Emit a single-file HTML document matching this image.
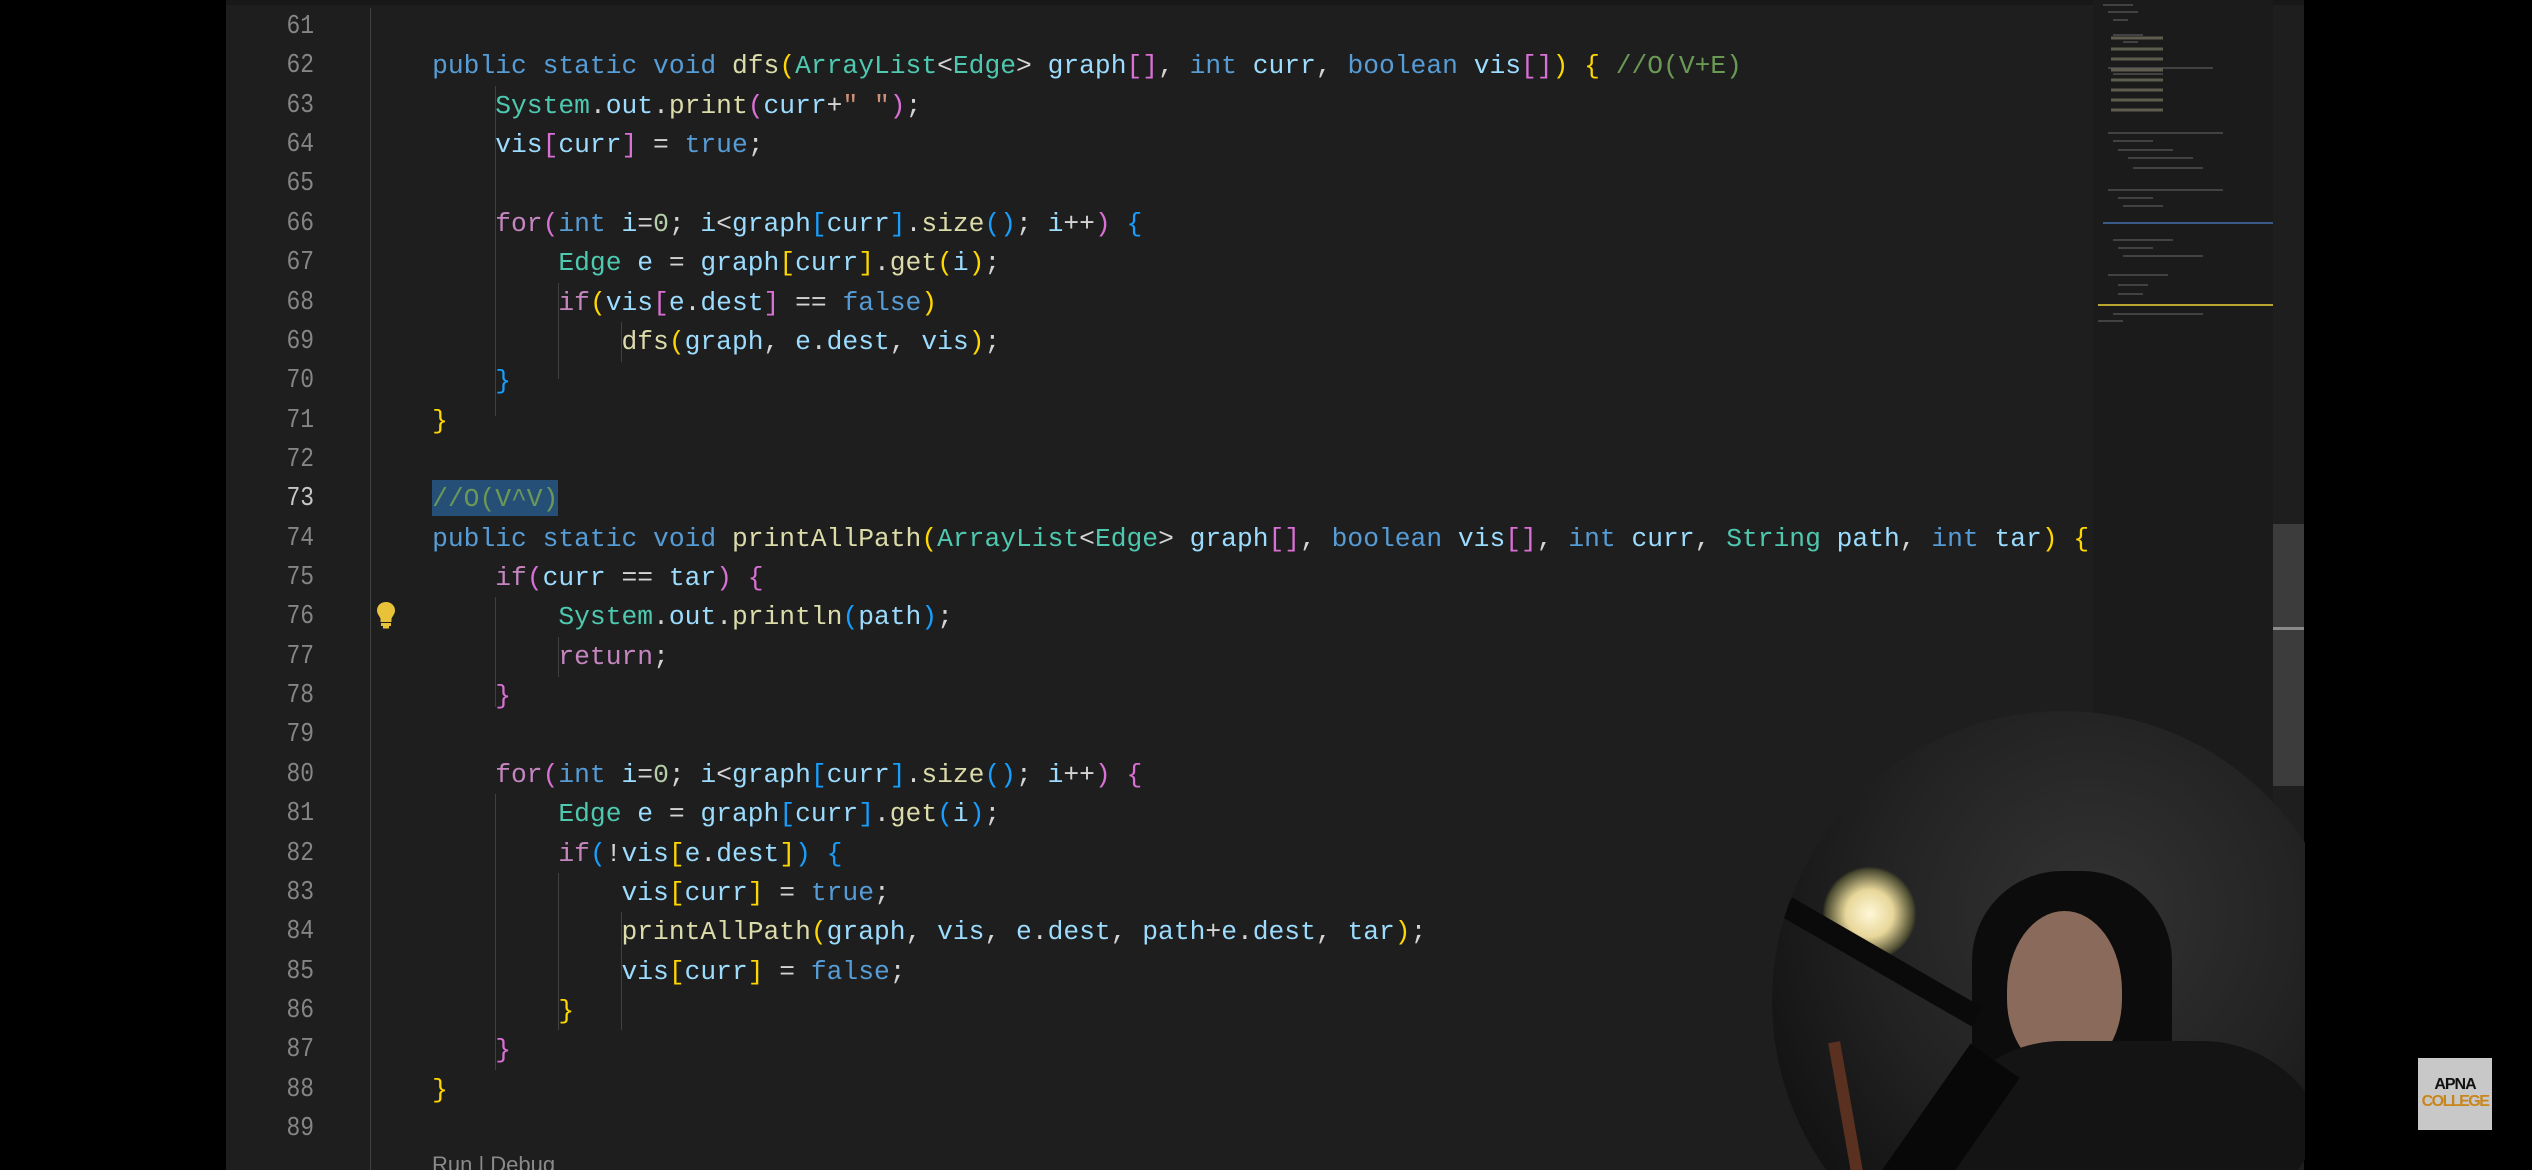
<!DOCTYPE html>
<html><head><meta charset="utf-8"><style>
html,body{margin:0;padding:0;background:#000;width:2532px;height:1170px;overflow:hidden;position:relative}
#ed{position:absolute;left:226px;top:0;width:2078px;height:1170px;background:#1e1e1e;}
#topbar{position:absolute;left:226px;top:0;width:2078px;height:5px;background:#181818}
.nums{position:absolute;left:226px;top:8px;width:88px;text-align:right;font-family:"Liberation Mono",monospace;font-size:27px;line-height:39.36px;color:#858585;transform:scaleX(0.85);transform-origin:right}
.code{position:absolute;left:369px;top:8px;font-family:"Liberation Mono",monospace;font-size:26.3px;line-height:39.36px;color:#d4d4d4;white-space:pre;}
.k{color:#569cd6}.c{color:#c586c0}.t{color:#4ec9b0}.f{color:#dcdcaa}.v{color:#9cdcfe}.s{color:#ce9178}.g{color:#6a9955}
.y{color:#ffd700}.p{color:#da70d6}.b{color:#179fff}.n{color:#b5cea8}
.guide{position:absolute;width:1px;background:#404040}
#mm{position:absolute;left:2093px;top:0;width:180px;height:1170px;background:#1b1b1b}
#sb{position:absolute;left:2273px;top:524px;width:31px;height:262px;background:#3c3c3c}
</style></head><body>
<div id="ed"></div><div id="topbar"></div>
<div id="mm">
<svg width="180" height="330" style="position:absolute;left:0;top:0" stroke-width="1.5">
<g stroke="#666" opacity="0.7">
<line x1="10" y1="5" x2="40" y2="5"/><line x1="15" y1="12" x2="45" y2="12"/><line x1="20" y1="20" x2="35" y2="20"/>
<line x1="20" y1="35" x2="50" y2="35"/><line x1="30" y1="42" x2="45" y2="42"/>
<line x1="15" y1="68" x2="120" y2="68"/><line x1="20" y1="74" x2="70" y2="74"/>
<line x1="15" y1="133" x2="130" y2="133"/><line x1="20" y1="141" x2="60" y2="141"/><line x1="25" y1="150" x2="80" y2="150"/><line x1="35" y1="158" x2="100" y2="158"/><line x1="40" y1="168" x2="110" y2="168"/>
<line x1="15" y1="190" x2="130" y2="190"/><line x1="25" y1="198" x2="60" y2="198"/><line x1="30" y1="206" x2="70" y2="206"/>
<line x1="20" y1="240" x2="80" y2="240"/><line x1="25" y1="248" x2="60" y2="248"/><line x1="30" y1="256" x2="110" y2="256"/>
<line x1="15" y1="275" x2="75" y2="275"/><line x1="25" y1="285" x2="55" y2="285"/><line x1="25" y1="294" x2="50" y2="294"/>
<line x1="20" y1="314" x2="110" y2="314"/><line x1="5" y1="321" x2="30" y2="321"/>
</g>
<g stroke="#8a8a70" stroke-width="3" opacity="0.6">
<line x1="18" y1="38" x2="70" y2="38"/><line x1="18" y1="49" x2="70" y2="49"/><line x1="18" y1="59" x2="70" y2="59"/><line x1="18" y1="70" x2="70" y2="70"/><line x1="18" y1="80" x2="70" y2="80"/><line x1="18" y1="90" x2="70" y2="90"/><line x1="18" y1="100" x2="70" y2="100"/><line x1="18" y1="110" x2="70" y2="110"/>
</g>
<line x1="10" y1="223" x2="180" y2="223" stroke="#3a5a8a" stroke-width="2"/>
<line x1="5" y1="305" x2="180" y2="305" stroke="#b8a530" stroke-width="2"/>
</svg></div>
<div id="sb"><div style="position:absolute;top:103px;left:0;width:31px;height:3px;background:#8a8a8a"></div></div>
<div class="guide" style="left:370px;top:8px;height:1162px"></div>
<div class="guide" style="left:495px;top:86px;height:330px"></div>
<div class="guide" style="left:558px;top:283px;height:96px"></div>
<div class="guide" style="left:621px;top:322px;height:40px"></div>
<div class="guide" style="left:495px;top:597px;height:110px"></div>
<div class="guide" style="left:558px;top:637px;height:40px"></div>
<div class="guide" style="left:495px;top:794px;height:276px"></div>
<div class="guide" style="left:558px;top:873px;height:157px"></div>
<div class="guide" style="left:621px;top:912px;height:118px"></div>
<div style="position:absolute;left:432px;top:480px;width:126px;height:36px;background:#264f78"></div>
<div class="nums">61<br>62<br>63<br>64<br>65<br>66<br>67<br>68<br>69<br>70<br>71<br>72<br><span style="color:#c6c6c6">73</span><br>74<br>75<br>76<br>77<br>78<br>79<br>80<br>81<br>82<br>83<br>84<br>85<br>86<br>87<br>88<br>89</div>
<svg style="position:absolute;left:376px;top:601px" width="20" height="28" viewBox="0 0 20 28"><path d="M10 1C4.5 1 1 5 1 9.5c0 3.5 2.5 5.5 3.5 8V21h11v-3.5c1-2.5 3.5-4.5 3.5-8C19 5 15.5 1 10 1z" fill="#e8c33a"/><rect x="5" y="22" width="10" height="3" fill="#e8c33a"/><rect x="7" y="25" width="6" height="2.5" fill="#e8c33a"/></svg>
<div class="code">
    <span class="k">public static void</span> <span class="f">dfs</span><span class="y">(</span><span class="t">ArrayList</span>&lt;<span class="t">Edge</span>&gt; <span class="v">graph</span><span class="p">[]</span>, <span class="k">int</span> <span class="v">curr</span>, <span class="k">boolean</span> <span class="v">vis</span><span class="p">[]</span><span class="y">)</span> <span class="y">{</span> <span class="g">//O(V+E)</span>
        <span class="t">System</span>.<span class="v">out</span>.<span class="f">print</span><span class="p">(</span><span class="v">curr</span>+<span class="s">" "</span><span class="p">)</span>;
        <span class="v">vis</span><span class="p">[</span><span class="v">curr</span><span class="p">]</span> = <span class="k">true</span>;

        <span class="c">for</span><span class="p">(</span><span class="k">int</span> <span class="v">i</span>=<span class="n">0</span>; <span class="v">i</span>&lt;<span class="v">graph</span><span class="b">[</span><span class="v">curr</span><span class="b">]</span>.<span class="f">size</span><span class="b">()</span>; <span class="v">i</span>++<span class="p">)</span> <span class="b">{</span>
            <span class="t">Edge</span> <span class="v">e</span> = <span class="v">graph</span><span class="y">[</span><span class="v">curr</span><span class="y">]</span>.<span class="f">get</span><span class="y">(</span><span class="v">i</span><span class="y">)</span>;
            <span class="c">if</span><span class="y">(</span><span class="v">vis</span><span class="p">[</span><span class="v">e</span>.<span class="v">dest</span><span class="p">]</span> == <span class="k">false</span><span class="y">)</span>
                <span class="f">dfs</span><span class="y">(</span><span class="v">graph</span>, <span class="v">e</span>.<span class="v">dest</span>, <span class="v">vis</span><span class="y">)</span>;
        <span class="b">}</span>
    <span class="y">}</span>

    <span class="g">//O(V^V)</span>
    <span class="k">public static void</span> <span class="f">printAllPath</span><span class="y">(</span><span class="t">ArrayList</span>&lt;<span class="t">Edge</span>&gt; <span class="v">graph</span><span class="p">[]</span>, <span class="k">boolean</span> <span class="v">vis</span><span class="p">[]</span>, <span class="k">int</span> <span class="v">curr</span>, <span class="t">String</span> <span class="v">path</span>, <span class="k">int</span> <span class="v">tar</span><span class="y">)</span> <span class="y">{</span>
        <span class="c">if</span><span class="p">(</span><span class="v">curr</span> == <span class="v">tar</span><span class="p">)</span> <span class="p">{</span>
            <span class="t">System</span>.<span class="v">out</span>.<span class="f">println</span><span class="b">(</span><span class="v">path</span><span class="b">)</span>;
            <span class="c">return</span>;
        <span class="p">}</span>

        <span class="c">for</span><span class="p">(</span><span class="k">int</span> <span class="v">i</span>=<span class="n">0</span>; <span class="v">i</span>&lt;<span class="v">graph</span><span class="b">[</span><span class="v">curr</span><span class="b">]</span>.<span class="f">size</span><span class="b">()</span>; <span class="v">i</span>++<span class="p">)</span> <span class="p">{</span>
            <span class="t">Edge</span> <span class="v">e</span> = <span class="v">graph</span><span class="b">[</span><span class="v">curr</span><span class="b">]</span>.<span class="f">get</span><span class="b">(</span><span class="v">i</span><span class="b">)</span>;
            <span class="c">if</span><span class="b">(</span>!<span class="v">vis</span><span class="y">[</span><span class="v">e</span>.<span class="v">dest</span><span class="y">]</span><span class="b">)</span> <span class="b">{</span>
                <span class="v">vis</span><span class="y">[</span><span class="v">curr</span><span class="y">]</span> = <span class="k">true</span>;
                <span class="f">printAllPath</span><span class="y">(</span><span class="v">graph</span>, <span class="v">vis</span>, <span class="v">e</span>.<span class="v">dest</span>, <span class="v">path</span>+<span class="v">e</span>.<span class="v">dest</span>, <span class="v">tar</span><span class="y">)</span>;
                <span class="v">vis</span><span class="y">[</span><span class="v">curr</span><span class="y">]</span> = <span class="k">false</span>;
            <span class="y">}</span>
        <span class="p">}</span>
    <span class="y">}</span>
</div>
<div style="position:absolute;left:432px;top:1152px;font-family:'Liberation Sans',sans-serif;font-size:22px;color:#8a8a8a;white-space:pre">Run | Debug</div>
<div style="position:absolute;left:1772px;top:711px;width:533px;height:459px;overflow:hidden">
 <div style="position:absolute;left:0;top:0;width:580px;height:580px;border-radius:50%;overflow:hidden;background:radial-gradient(circle at 55% 35%,#333 0%,#222 45%,#121212 75%)">
  <div style="position:absolute;left:50px;top:155px;width:95px;height:95px;border-radius:50%;background:radial-gradient(circle,#fff8d8 0%,#e8d79a 35%,#4a4a30 65%,transparent 70%)"></div>
  <div style="position:absolute;left:200px;top:160px;width:200px;height:440px;border-radius:90px 90px 0 0;background:#0c0c0c"></div>
  <div style="position:absolute;left:235px;top:200px;width:115px;height:160px;border-radius:50% 50% 45% 45%;background:#8a6a5a"></div>
  <div style="position:absolute;left:160px;top:330px;width:400px;height:300px;border-radius:130px 130px 0 0;background:#141414"></div>
  <div style="position:absolute;left:130px;top:330px;width:60px;height:220px;background:#080808;transform:rotate(35deg)"></div>
  <div style="position:absolute;left:0;top:240px;width:220px;height:22px;background:#0a0a0a;transform:rotate(30deg);transform-origin:left}"></div>
  <div style="position:absolute;left:70px;top:330px;width:12px;height:160px;background:#5a3020;transform:rotate(-10deg)"></div>
 </div>
</div>
<div style="position:absolute;left:2418px;top:1058px;width:74px;height:72px;background:#c8c8c8;font-family:'Liberation Sans',sans-serif;font-weight:bold;text-align:center;line-height:17px">
 <div style="margin-top:18px;font-size:16px;color:#111;letter-spacing:-1px">APNA</div>
 <div style="font-size:16px;color:#c8861a;letter-spacing:-1.5px">COLLEGE</div>
</div>
</body></html>
